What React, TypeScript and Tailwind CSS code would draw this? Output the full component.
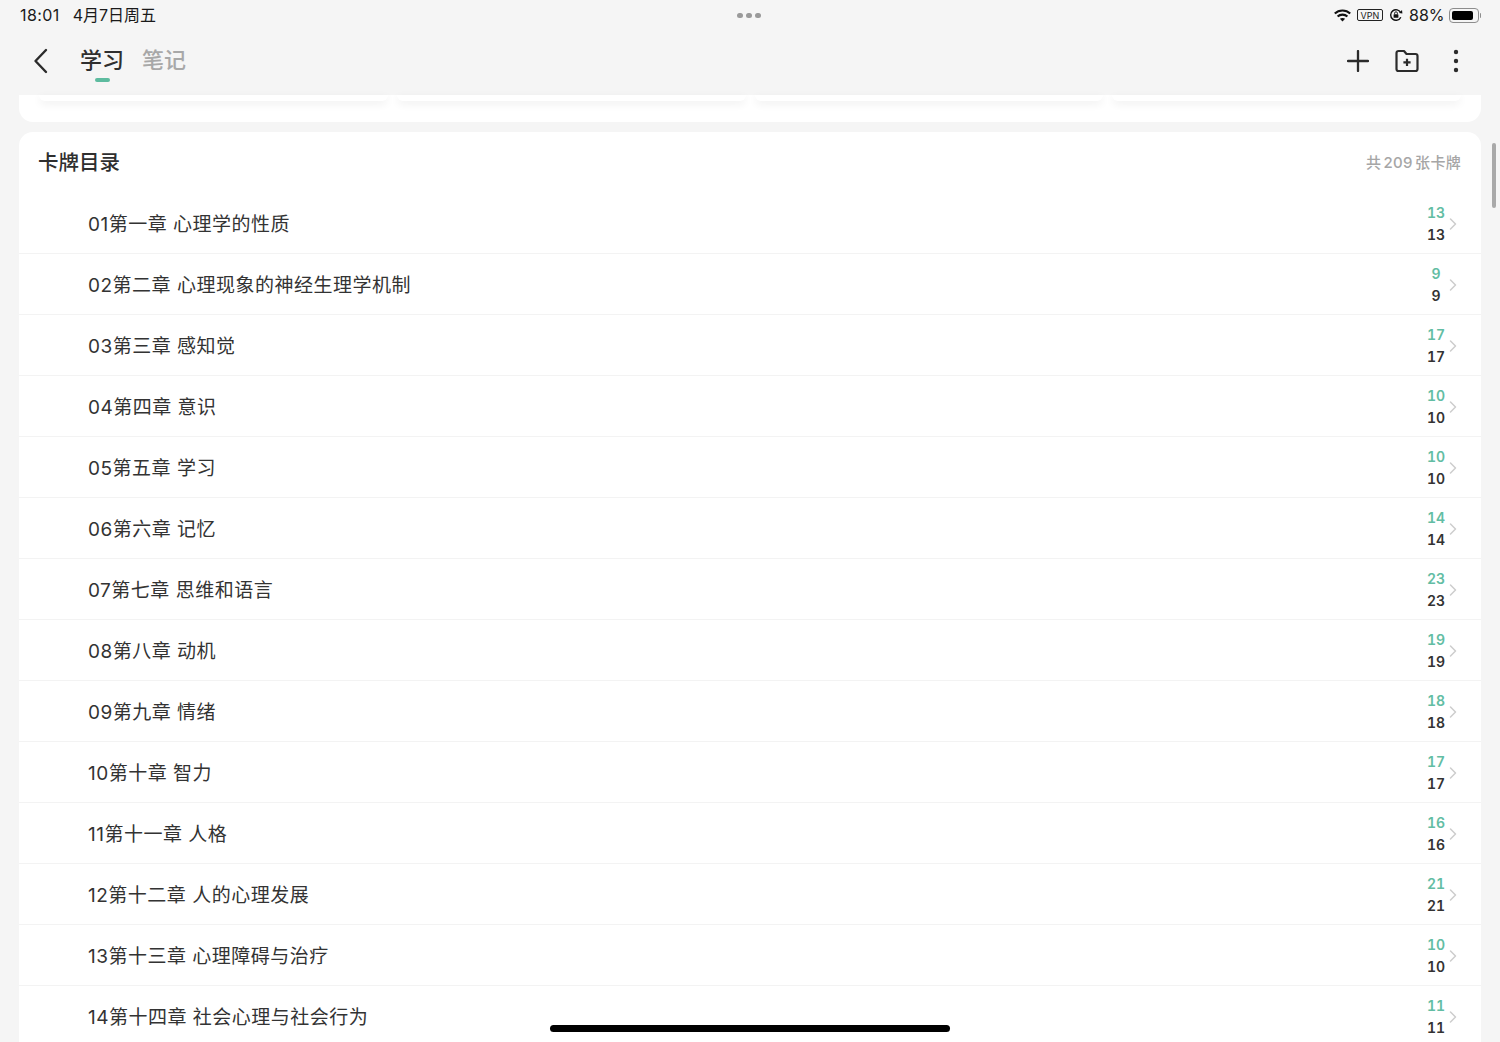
import { ChevronRight } from "lucide-react";

const FONT = "font-['Inter','Noto_Sans_CJK_SC',sans-serif]";

const chapters = [
  { title: "01第一章 心理学的性质", count: 13 },
  { title: "02第二章 心理现象的神经生理学机制", count: 9 },
  { title: "03第三章 感知觉", count: 17 },
  { title: "04第四章 意识", count: 10 },
  { title: "05第五章 学习", count: 10 },
  { title: "06第六章 记忆", count: 14 },
  { title: "07第七章 思维和语言", count: 23 },
  { title: "08第八章 动机", count: 19 },
  { title: "09第九章 情绪", count: 18 },
  { title: "10第十章 智力", count: 17 },
  { title: "11第十一章 人格", count: 16 },
  { title: "12第十二章 人的心理发展", count: 21 },
  { title: "13第十三章 心理障碍与治疗", count: 10 },
  { title: "14第十四章 社会心理与社会行为", count: 11 },
];

function StatusBar() {
  return (
    <div className="relative flex h-[30px] items-center justify-between pl-5 pr-[19px] text-[16px] text-[#1a1a1a]">
      <div className="flex items-center gap-[13px]">
        <span className="tracking-[0.4px]">18:01</span>
        <span>4月7日周五</span>
      </div>
      <div className="absolute left-[737px] top-[13px] flex gap-[3px]">
        <span className="h-[5px] w-[6px] rounded-full bg-[#9a9a9a]" />
        <span className="h-[5px] w-[6px] rounded-full bg-[#9a9a9a]" />
        <span className="h-[5px] w-[6px] rounded-full bg-[#9a9a9a]" />
      </div>
      <div className="flex items-center">
        <svg width="17" height="13" viewBox="0 0 17 13" className="mr-[6px]">
          <path d="M0.8 4.6 C5 0.4 12 0.4 16.2 4.6" fill="none" stroke="#111" strokeWidth="2.1" />
          <path d="M3.6 7.5 C6.3 5 10.7 5 13.4 7.5" fill="none" stroke="#111" strokeWidth="2.1" />
          <path d="M8.5 12.4 L5.9 9.8 C7.4 8.6 9.6 8.6 11.1 9.8 Z" fill="#111" />
        </svg>
        <span className="mr-[6px] flex h-[12px] w-[26px] items-center justify-center rounded-[2px] border border-[#222] text-[9px] leading-none">
          VPN
        </span>
        <svg width="14" height="14" viewBox="0 0 14 14" className="mr-[6px]">
          <path d="M11.8 9.2 A5.3 5.3 0 1 1 11.8 4.8" fill="none" stroke="#111" strokeWidth="1.4" />
          <path d="M10 5 L13.4 5.4 L13 2 Z" fill="#111" />
          <rect x="4.6" y="6.2" width="4.8" height="3.6" rx="0.6" fill="#111" />
          <path d="M5.6 6.2 V5.2 A1.4 1.4 0 0 1 8.4 5.2 V6.2" fill="none" stroke="#111" strokeWidth="0.9" />
        </svg>
        <span className="mr-[4px]">88%</span>
        <div className="flex h-[15px] w-[30px] items-center rounded-[4px] border border-[#8d8d8d] p-[2px]">
          <div className="h-full w-[88%] rounded-[2px] bg-black" />
        </div>
        <span className="ml-[1px] h-[5px] w-[1.5px] rounded-r-full bg-[#8d8d8d]" />
      </div>
    </div>
  );
}

function Header() {
  return (
    <div className="flex h-[65px] items-start justify-between pl-[33px] pr-[41px]">
      <div className="flex items-start">
        <svg width="15" height="26" viewBox="0 0 15 26" className="mt-[18px]">
          <path d="M13 2 L2.5 13 L13 24" fill="none" stroke="#2b2b2b" strokeWidth="2.4" strokeLinecap="round" strokeLinejoin="round" />
        </svg>
        <div className="ml-[32px] mt-[15px] flex flex-col items-center">
          <span className="text-[22px] leading-[30px] font-medium text-[#2f2f2f]">学习</span>
          <span className="mt-[3px] h-[4px] w-[15px] rounded-full bg-[#5dbb9f]" />
        </div>
        <span className="ml-[18px] mt-[15px] text-[22px] leading-[30px] font-medium text-[#a8a8a8]">笔记</span>
      </div>
      <div className="mt-[19px] flex items-center">
        <svg width="22" height="22" viewBox="0 0 22 22">
          <path d="M11 1 V21 M1 11 H21" stroke="#2b2b2b" strokeWidth="2.3" strokeLinecap="round" />
        </svg>
        <svg width="24" height="24" viewBox="0 0 24 24" className="ml-[26px]">
          <path
            d="M1.5 4 A2 2 0 0 1 3.5 2 H9 L11.5 5 H20.5 A2 2 0 0 1 22.5 7 V20 A2 2 0 0 1 20.5 22 H3.5 A2 2 0 0 1 1.5 20 Z"
            fill="none"
            stroke="#2b2b2b"
            strokeWidth="2.2"
            strokeLinejoin="round"
          />
          <path d="M12 9.8 V17 M8.4 13.4 H15.6" stroke="#2b2b2b" strokeWidth="2.2" />
        </svg>
        <svg width="6" height="24" viewBox="0 0 6 24" className="ml-[34px]">
          <circle cx="3" cy="3" r="2.2" fill="#2b2b2b" />
          <circle cx="3" cy="12" r="2.2" fill="#2b2b2b" />
          <circle cx="3" cy="21" r="2.2" fill="#2b2b2b" />
        </svg>
      </div>
    </div>
  );
}

function ChapterRow({ title, count }: { title: string; count: number }) {
  return (
    <div className="flex h-[61px] items-center justify-between border-b border-[#f3f3f3] pl-[69px] pr-[18px]">
      <span className="block pt-[4px] text-[19px] tracking-[0.5px] text-[#333]">{title}</span>
      <div className="flex items-center pt-[2px]">
        <div className="flex w-[16px] flex-col items-center text-[14px] leading-[22px] font-semibold tabular-nums">
          <span className="text-[#62bda3]">{count}</span>
          <span className="text-[#333]">{count}</span>
        </div>
        <ChevronRight size={20} strokeWidth={1.8} className="ml-[-1px] text-[#cdcdcd]" />
      </div>
    </div>
  );
}

export default function App() {
  return (
    <div className={`relative h-[1042px] w-[1500px] overflow-hidden bg-[#f5f5f5] ${FONT}`}>
      <StatusBar />
      <Header />

      <div className="mx-[19px] flex h-[27px] gap-[9px] rounded-b-[14px] bg-white px-[20px]">
        <div className="h-[6px] flex-1 rounded-b-[12px] bg-white shadow-[0_3px_8px_rgba(0,0,0,0.07)]" />
        <div className="h-[6px] flex-1 rounded-b-[12px] bg-white shadow-[0_3px_8px_rgba(0,0,0,0.07)]" />
        <div className="h-[6px] flex-1 rounded-b-[12px] bg-white shadow-[0_3px_8px_rgba(0,0,0,0.07)]" />
        <div className="h-[6px] flex-1 rounded-b-[12px] bg-white shadow-[0_3px_8px_rgba(0,0,0,0.07)]" />
      </div>

      <div className="mx-[19px] mt-[10px] rounded-t-[14px] bg-white">
        <div className="flex h-[61px] items-center justify-between pl-[19px] pr-[20px]">
          <span className="block pt-[1px] text-[20.5px] font-medium text-[#2f2f2f]">卡牌目录</span>
          <span className="block pt-[2px] text-[15px] font-medium tracking-[0.3px] [word-spacing:-2px] text-[#a6a6a6]">共 209 张卡牌</span>
        </div>
        {chapters.map((c) => (
          <ChapterRow key={c.title} title={c.title} count={c.count} />
        ))}
      </div>

      {/* scrollbar + home indicator sit over the page */}
      <div className="absolute right-[4px] top-[143px] h-[65px] w-[4px] rounded-full bg-[#a9a9a9]" />
      <div className="absolute bottom-[10px] left-[550px] h-[7px] w-[400px] rounded-full bg-black" />
    </div>
  );
}
